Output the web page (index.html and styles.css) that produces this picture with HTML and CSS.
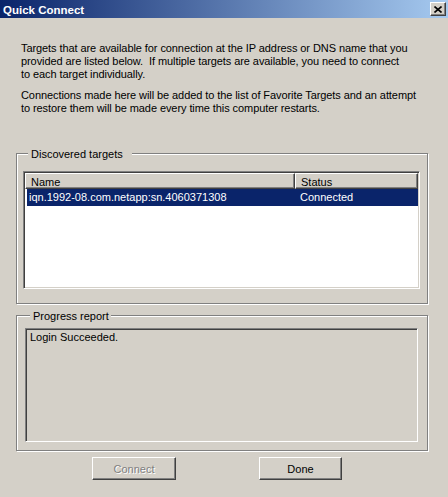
FILE: index.html
```html
<!DOCTYPE html>
<html lang="en">
<head>
    <meta charset="UTF-8">
    <meta name="viewport" content="width=device-width, initial-scale=1.0">
    <title>Quick Connect</title>
    <link rel="stylesheet" href="styles.css">
</head>
<body>
    <div class="window">
        <div class="titlebar">
            <span class="title">Quick Connect</span>
            <button class="close-button" aria-label="Close">
                <svg width="8" height="7" viewBox="0 0 8 7">
                    <path d="M0.5 0.5 L7.5 6.5 M7.5 0.5 L0.5 6.5" stroke="#000" stroke-width="1.6" fill="none"/>
                </svg>
            </button>
        </div>

        <div class="content">
            <p class="intro">
                Targets that are available for connection at the IP address or DNS name that you<br>
                provided are listed below.&nbsp; If multiple targets are available, you need to connect<br>
                to each target individually.
            </p>
            <p class="intro">
                Connections made here will be added to the list of Favorite Targets and an attempt<br>
                to restore them will be made every time this computer restarts.
            </p>

            <div class="group group-targets">
                <div class="group-title wide">Discovered targets</div>
                <div class="list-view">
                    <div class="list-header">
                        <div class="header-cell name-col">Name</div>
                        <div class="header-cell status-col">Status</div>
                    </div>
                    <div class="list-row selected">
                        <div class="row-cell name-col">iqn.1992-08.com.netapp:sn.4060371308</div>
                        <div class="row-cell status-col">Connected</div>
                    </div>
                </div>
            </div>

            <div class="group group-progress">
                <div class="group-title">Progress report</div>
                <div class="progress-box">Login Succeeded.</div>
            </div>

            <div class="button-row">
                <button class="push-button connect" disabled>Connect</button>
                <button class="push-button done">Done</button>
            </div>
        </div>
    </div>
</body>
</html>
```

FILE: styles.css
```css
* {
    margin: 0;
    padding: 0;
    box-sizing: border-box;
}

body {
    font-family: "Liberation Sans", Arial, sans-serif;
    font-size: 11px;
    line-height: 13px;
    color: #000;
    background: #d4d0c8;
}

.window {
    width: 448px;
    height: 497px;
    background: #d4d0c8;
}

/* Title bar */
.titlebar {
    height: 18px;
    display: flex;
    align-items: center;
    justify-content: space-between;
    padding: 0 2px 0 3px;
    background: linear-gradient(to right, #0a246a 0%, #a6caf0 100%);
}

.title {
    color: #fff;
    font-weight: bold;
    font-size: 11.5px;
    line-height: 14px;
    padding-top: 1px;
}

.close-button {
    width: 16px;
    height: 14px;
    display: flex;
    align-items: center;
    justify-content: center;
    background: #d4d0c8;
    border: 1px solid;
    border-color: #fff #404040 #404040 #fff;
    box-shadow: inset -1px -1px 0 #808080;
}

/* Dialog body */
.content {
    padding: 24px 20px 0 16px;
}

.intro {
    margin-left: 5px;
    margin-bottom: 8px;
    letter-spacing: -0.08px;
}

.group {
    border: 1px solid #808080;
    box-shadow: inset 1px 1px 0 #fff, 1px 1px 0 #fff;
}

.group-title {
    width: fit-content;
    margin: -6px 0 0 5px;
    padding: 0 2px 0 3px;
    background: #d4d0c8;
}

.group-title.wide {
    padding-right: 9px;
}

/* margin collapses with the paragraph above */
.group-targets {
    margin-top: 38px;
    padding: 0 7px 14px 6px;
}

.group-progress {
    margin-top: 11px;
    padding: 0 9px 8px 8px;
}

/* List view */
.list-view {
    margin-top: 10px;
    height: 118px;
    background: #fff;
    border: 1px solid;
    border-color: #808080 #fff #fff #808080;
    box-shadow: inset 1px 1px 0 #404040, inset -1px -1px 0 #d4d0c8;
    padding: 1px;
}

.list-header {
    display: grid;
    grid-template-columns: 270px 1fr;
}

.header-cell {
    height: 16px;
    padding: 1px 5px 0 5px;
    line-height: 14px;
    background: #d4d0c8;
    border: 1px solid;
    border-color: #fff #404040 #404040 #fff;
    box-shadow: inset -1px -1px 0 #808080;
}

.list-row {
    display: grid;
    grid-template-columns: 268px 1fr;
    margin-left: 2px;
    height: 17px;
    line-height: 17px;
}

.list-row.selected {
    background: #0a246a;
    color: #fff;
}

.row-cell.name-col {
    padding-left: 2px;
}

.row-cell.status-col {
    padding-left: 5px;
}

/* Progress report */
.progress-box {
    margin-top: 5px;
    height: 114px;
    padding: 2px 4px;
    border: 1px solid;
    border-color: #808080 #fff #fff #808080;
    box-shadow: inset 1px 1px 0 #404040, inset -1px -1px 0 #d4d0c8;
}

/* Buttons */
.button-row {
    display: flex;
    gap: 83px;
    margin-top: 6px;
    padding-left: 76px;
}

.push-button {
    width: 84px;
    height: 23px;
    font-family: "Liberation Sans", Arial, sans-serif;
    font-size: 11px;
    background: #d4d0c8;
    color: #000;
    border: 1px solid;
    border-color: #fff #404040 #404040 #fff;
    box-shadow: inset -1px -1px 0 #808080;
}

.push-button:disabled {
    color: #808080;
    text-shadow: 1px 1px 0 #fff;
}

.push-button.done {
    width: 83px;
}
```
